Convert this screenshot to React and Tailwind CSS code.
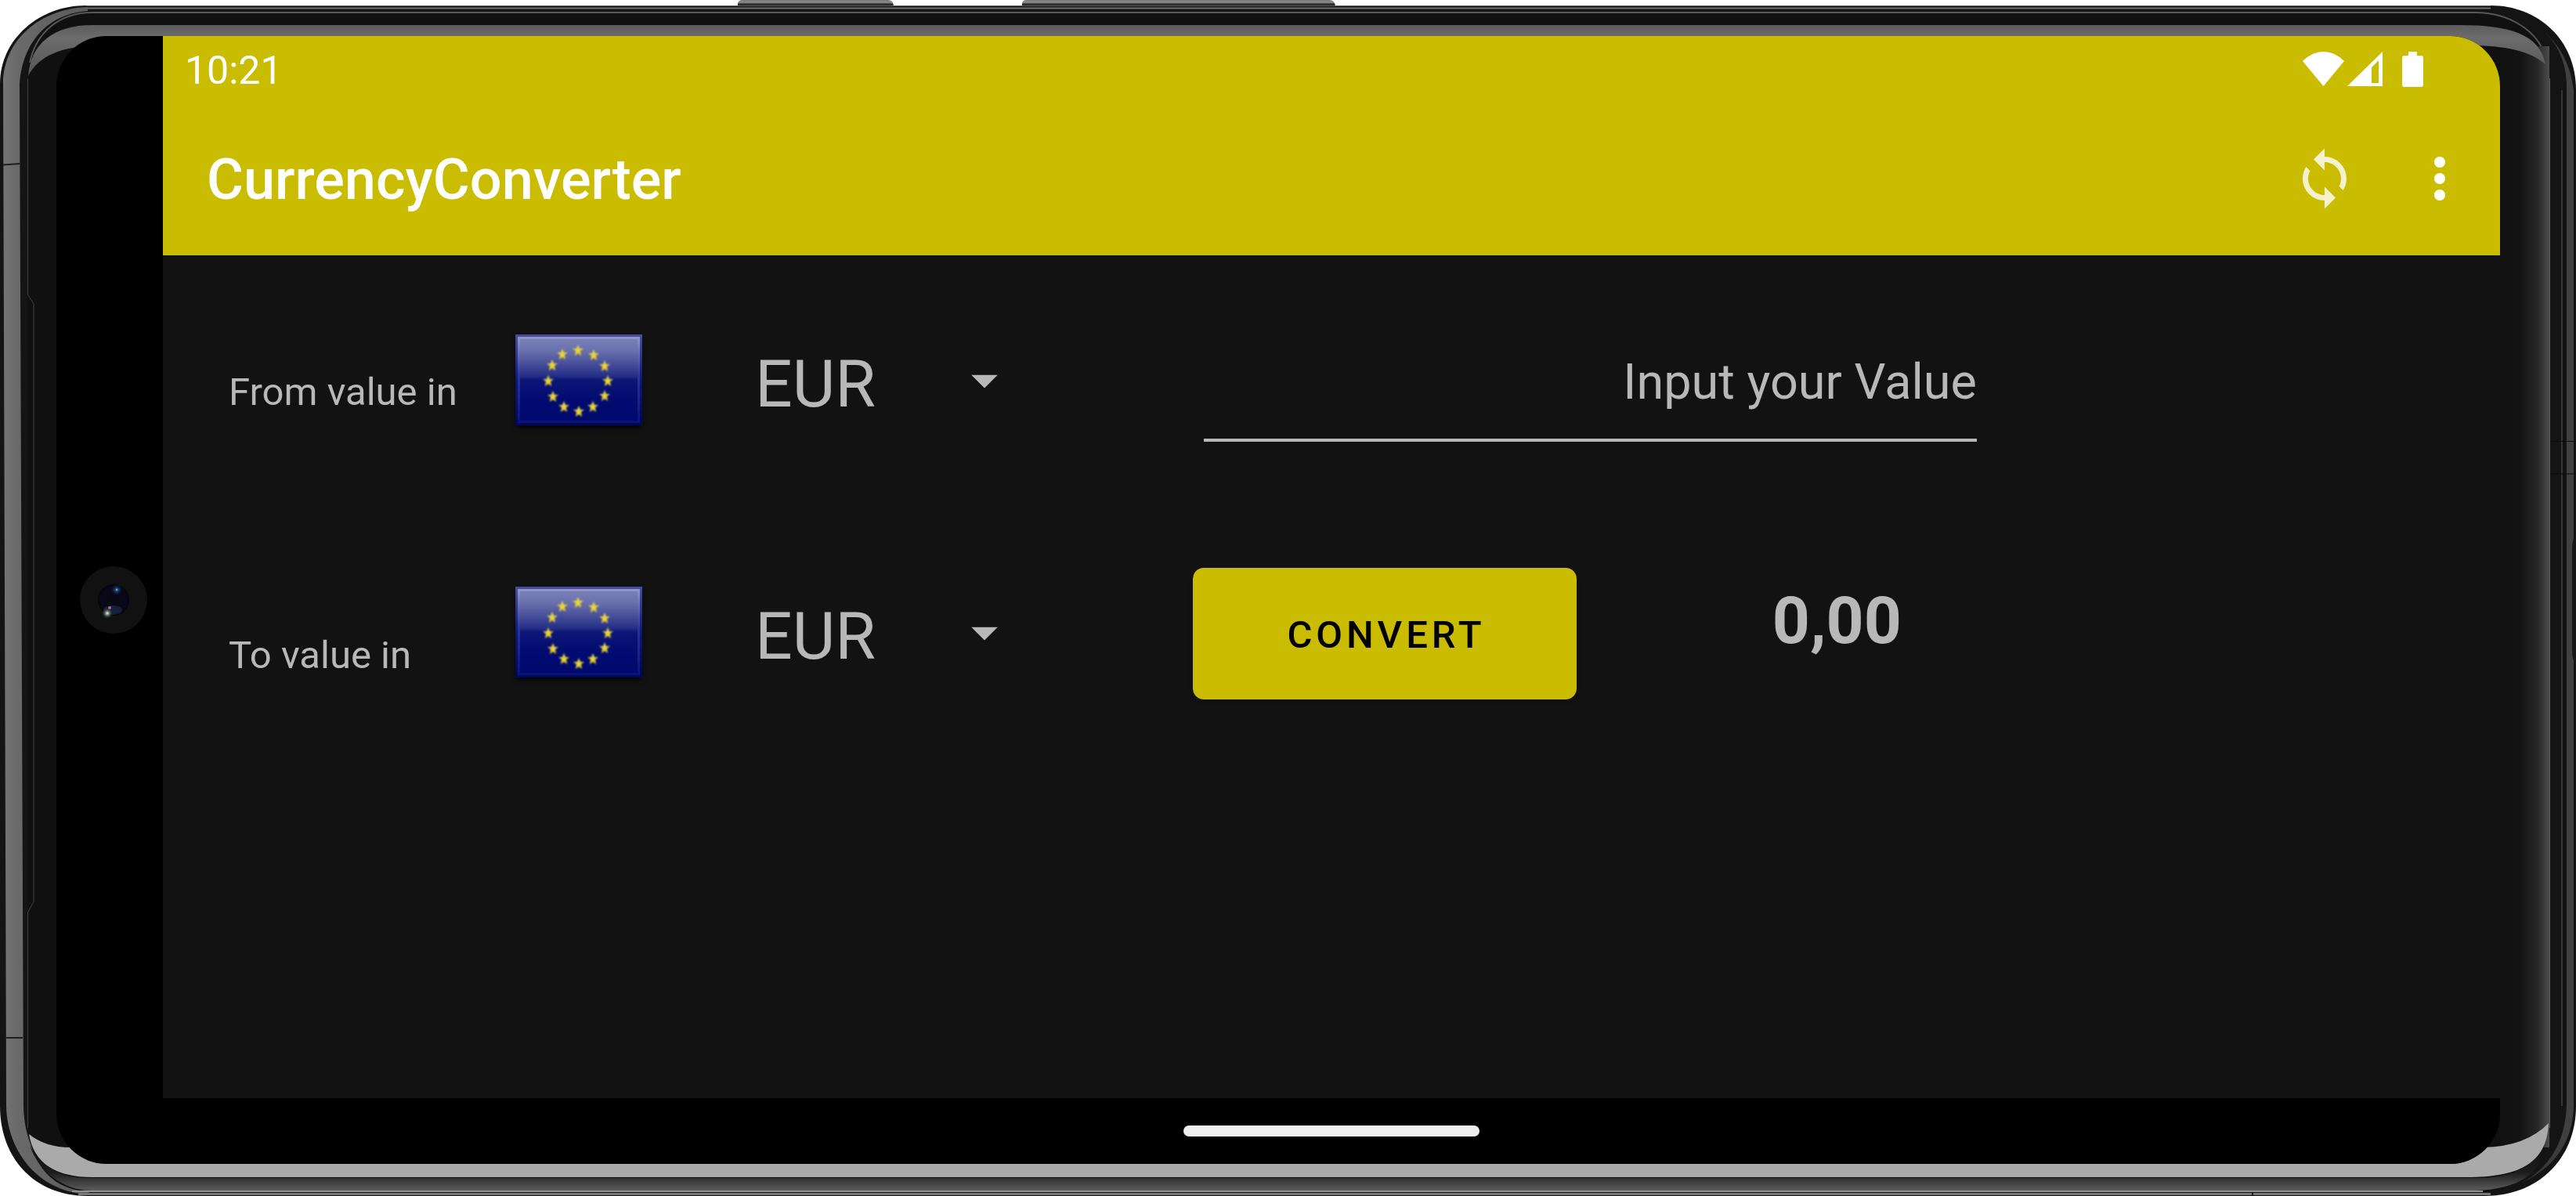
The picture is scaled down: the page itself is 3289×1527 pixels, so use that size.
import { useState } from "react";
import { MdMoreVert, MdSync } from "react-icons/md";

const STARS = [
  [80, 20], [100, 26], [114, 40], [118, 59], [114, 78], [99, 92],
  [81, 98], [62, 92], [48, 79], [42, 59], [47, 39], [60, 25],
];

const STAR_PATH = "M0 -7L2 -2L7 -2L3 1L4 7L0 4L-4 7L-3 1L-7 -2L-2 -2Z";

function Flag() {
  return (
    <svg viewBox="0 0 162 116" className="h-[116px] w-[162px] shadow-md shadow-black/60" role="img" aria-label="European Union">
      <defs>
        <linearGradient id="flagBlue" x1="0" y1="0" x2="0" y2="1">
          <stop offset="0" stopColor="#7d84ba" />
          <stop offset="0.18" stopColor="#6a70ad" />
          <stop offset="0.46" stopColor="#242e86" />
          <stop offset="0.5" stopColor="#0b1676" />
          <stop offset="0.75" stopColor="#000a70" />
          <stop offset="1" stopColor="#00086c" />
        </linearGradient>
        <linearGradient id="flagEdge" x1="0" y1="0" x2="0" y2="1">
          <stop offset="0" stopColor="#454ca0" />
          <stop offset="0.5" stopColor="#0e167a" />
          <stop offset="1" stopColor="#000760" />
        </linearGradient>
        <linearGradient id="flagInner" x1="0" y1="0" x2="0" y2="1">
          <stop offset="0" stopColor="#8f95c8" />
          <stop offset="0.45" stopColor="#2c3690" />
          <stop offset="1" stopColor="#0a1476" />
        </linearGradient>
        <linearGradient id="starGold" gradientUnits="userSpaceOnUse" x1="0" y1="-6" x2="0" y2="6">
          <stop offset="0" stopColor="#e8d850" />
          <stop offset="1" stopColor="#e6cf28" />
        </linearGradient>
        <filter id="starSoft"><feGaussianBlur stdDeviation="1" /></filter>
      </defs>
      <rect width="162" height="116" fill="url(#flagBlue)" />
      <rect x="4.500" y="4.500" width="153" height="107" fill="none" stroke="url(#flagInner)" strokeWidth="3" />
      <rect x="1.500" y="1.500" width="159" height="113" fill="none" stroke="url(#flagEdge)" strokeWidth="3" />
      <g filter="url(#starSoft)">
        {STARS.map(([x, y]) => (
          <path key={`${x}-${y}`} d={STAR_PATH} transform={`translate(${x} ${y})`} fill="url(#starGold)" />
        ))}
      </g>
    </svg>
  );
}

function CurrencySelect({ id }) {
  return (
    <div className="relative w-[310px]">
      <select id={id} className="w-full appearance-none bg-transparent pt-2 text-[84px] leading-[98px] text-[#b8b8b8] outline-none" defaultValue="EUR">
        <option>EUR</option>
        <option>USD</option>
        <option>GBP</option>
      </select>
      <svg viewBox="0 0 34 17" className="pointer-events-none absolute top-1/2 right-0 h-[17px] w-[34px] -translate-y-1/2" aria-hidden="true">
        <path d="M0 0H34L17 17Z" fill="#b8b8b8" />
      </svg>
    </div>
  );
}

function PhoneBody() {
  return (
    <svg viewBox="0 0 3289 1527" preserveAspectRatio="none" className="absolute inset-0 h-full w-full" aria-hidden="true">
      <defs>
        <linearGradient id="leftRail" x1="0" x2="1" y1="0" y2="0" gradientUnits="objectBoundingBox">
          <stop offset="0" stopColor="#747474" />
          <stop offset="0.15" stopColor="#6a6a6a" />
          <stop offset="1" stopColor="#5a5a5a" />
        </linearGradient>
        <linearGradient id="rightGlass" x1="0" x2="1" y1="0" y2="0">
          <stop offset="0" stopColor="#101010" />
          <stop offset="0.4" stopColor="#131313" />
          <stop offset="0.75" stopColor="#262626" />
          <stop offset="1" stopColor="#4c4c4c" />
        </linearGradient>
        <linearGradient id="rightRail" x1="0" x2="1" y1="0" y2="0">
          <stop offset="0" stopColor="#303030" />
          <stop offset="1" stopColor="#424242" />
        </linearGradient>
        <linearGradient id="topGlow" x1="0" x2="0" y1="0" y2="1">
          <stop offset="0" stopColor="#5c5c5c" />
          <stop offset="0.25" stopColor="#6c6c6c" />
          <stop offset="1" stopColor="#545454" />
        </linearGradient>
        <linearGradient id="bottomLip" x1="0" x2="0" y1="0" y2="1">
          <stop offset="0" stopColor="#101010" />
          <stop offset="0.6" stopColor="#1c1c1c" />
          <stop offset="1" stopColor="#5c5c5c" />
        </linearGradient>
        <linearGradient id="keyMetal" x1="0" x2="0" y1="0" y2="1">
          <stop offset="0" stopColor="#777777" />
          <stop offset="0.35" stopColor="#8d8d8d" />
          <stop offset="0.55" stopColor="#303030" />
          <stop offset="1" stopColor="#1c1c1c" />
        </linearGradient>
      </defs>

      {/* side keys */}
      <path d="M942 9V5Q942 0 948 0H1134Q1141 0 1141 9Z" fill="url(#keyMetal)" />
      <path d="M1305 9V5Q1305 0 1311 0H1697Q1705 0 1705 9Z" fill="url(#keyMetal)" />

      {/* outer shell */}
      <path d="M110 7H3180C3240 7 3289 50 3289 115V1412C3289 1480 3240 1527 3172 1527H112C45 1527 0 1480 0 1412V107C0 50 50 7 110 7Z" fill="#141414" />
      <path d="M110 7.500H3180" stroke="#5c5c5c" strokeWidth="1" />
      <path d="M110 10.500H3180" stroke="#6e6e6e" strokeWidth="2" />

      {/* metal rails */}
      <path d="M112 9C50 11 4 52 4 107L8 1412C9 1472 52 1524 116 1525L112 1521C62 1514 31 1470 30 1412L25 112C26 62 55 18 112 14Z" fill="url(#leftRail)" />
      <path d="M4 210.500L25 209M8 1325H29" stroke="#202020" strokeWidth="2" fill="none" />
      <path d="M3277 105Q3274 60 3243 36Q3280 65 3286 115V1412Q3284 1480 3220 1510Q3274 1480 3277 1412Z" fill="url(#rightRail)" />
      <path d="M3271 115V1412" stroke="#343434" strokeWidth="2" />
      <path d="M3257 563.500H3289M3257 605H3289" stroke="#080808" strokeWidth="1" />
      <path d="M3289 680Q3284 690 3284 700V832Q3284 842 3289 850Z" fill="#161616" />
      <path d="M100 1524.500H3180" stroke="#787878" strokeWidth="3" />
      <path d="M2876 1523V1527" stroke="#1c1c1c" strokeWidth="2" />

      {/* glass */}
      <path d="M112 17H3160C3222 17 3256 52 3256 112V1424C3256 1488 3220 1521 3160 1521H116C64 1521 35 1482 35 1424V100C36 48 65 17 112 17Z" fill="#101010" />
      <path d="M38 80C46 42 75 16 118 16H3160C3205 16 3240 40 3250 72" fill="none" stroke="#565656" strokeWidth="2" />
      <rect x="3192" y="59" width="63" height="1406" fill="url(#rightGlass)" />
      <path d="M3255.500 100V1440" stroke="#5a5a5a" strokeWidth="1" />
      <path d="M110 1504H3170C3215 1502 3240 1484 3248 1462C3246 1498 3215 1519 3160 1520H116C80 1520 48 1494 38 1462C52 1490 78 1504 110 1504Z" fill="url(#bottomLip)" />
      <path d="M92 1521H3170" stroke="#929292" strokeWidth="2" />
      <path d="M36 97C39 56 68 32 118 32H3140C3205 32 3243 44 3250 82C3230 65 3200 58 3150 58H120C80 60 50 70 36 97Z" fill="url(#topGlow)" />
      <path d="M37 1448Q58 1465 90 1465H3170Q3225 1464 3254 1434C3252 1486 3215 1503 3150 1503H118Q46 1503 37 1448Z" fill="#aaaaaa" />
      <path d="M35.500 100V376L43 388V1151L35.500 1165V1440" fill="none" stroke="#424242" strokeWidth="1" />
    </svg>
  );
}

function Camera() {
  return (
    <svg viewBox="0 0 86 86" className="h-[86px] w-[86px]" aria-hidden="true">
      <defs>
        <radialGradient id="lens" cx="0.5" cy="0.5" r="0.5">
          <stop offset="0" stopColor="#0c0710" />
          <stop offset="0.8" stopColor="#08091a" />
          <stop offset="1" stopColor="#050507" />
        </radialGradient>
        <radialGradient id="glintBlue">
          <stop offset="0" stopColor="#9bd0f0" />
          <stop offset="0.25" stopColor="#1d4a76" />
          <stop offset="1" stopColor="#0a1c3c" stopOpacity="0" />
        </radialGradient>
        <radialGradient id="glintWarm">
          <stop offset="0" stopColor="#f4f4d8" />
          <stop offset="0.35" stopColor="#75806c" />
          <stop offset="1" stopColor="#20283c" stopOpacity="0" />
        </radialGradient>
      </defs>
      <circle cx="43" cy="43" r="43" fill="#111111" />
      <circle cx="43" cy="43" r="20" fill="url(#lens)" />
      <ellipse cx="42" cy="56" rx="12" ry="6" fill="#2c4c80" opacity="0.35" />
      <circle cx="47" cy="30" r="7" fill="url(#glintBlue)" />
      <circle cx="35" cy="60" r="7" fill="url(#glintWarm)" />
      <circle cx="38" cy="53" r="2" fill="#a86a9c" />
    </svg>
  );
}

function StatusIcons() {
  return (
    <div className="flex items-center text-white" aria-hidden="true">
      <svg viewBox="0 0 53 44" className="h-[44px] w-[53px]">
        <path d="M0 12Q12 0 26.500 0T53 12L26.500 44Z" fill="currentColor" />
      </svg>
      <svg viewBox="0 0 45 44" className="ml-1 h-[44px] w-[45px]">
        <path fillRule="evenodd" d="M0 44L45 0V44ZM31 20V40H40V11Z" fill="currentColor" />
      </svg>
      <svg viewBox="0 0 27 45" className="ml-[25px] h-[45px] w-[27px]">
        <path d="M8 0H19V5H24Q27 5 27 8V42Q27 45 24 45H3Q0 45 0 42V8Q0 5 3 5H8Z" fill="currentColor" />
      </svg>
    </div>
  );
}

const ROW = "grid h-[322px] grid-cols-[366fr_306fr_559fr_1001fr_668fr] items-center";

export default function App() {
  const [value, setValue] = useState("");

  return (
    <div className="relative min-h-screen bg-white pt-[46px] pr-[97px] pb-[41px] pl-[72px] font-['Roboto',sans-serif]">
      <PhoneBody />
      <div className="relative flex min-h-[1440px] overflow-hidden rounded-[64px] bg-black">
        <div className="flex w-[136px] shrink-0 items-center pl-[30px]">
          <Camera />
        </div>

        <div className="flex flex-1 flex-col">
          <header className="bg-[#cabc00] text-white">
            <div className="flex h-[84px] items-center justify-between pr-[98px] pl-7">
              <time className="pt-1 text-[50px] leading-[58px]">10:21</time>
              <StatusIcons />
            </div>
            <div className="flex h-[196px] items-center justify-between pr-[35px] pl-14">
              <h1 className="pt-1 text-[72px] leading-[82px] font-medium">CurrencyConverter</h1>
              <div className="flex items-center gap-[63px]">
                <button type="button" aria-label="Refresh rates">
                  <MdSync className="h-[84px] w-[84px] text-white/80" />
                </button>
                <button type="button" aria-label="More options">
                  <MdMoreVert className="h-[84px] w-[84px]" />
                </button>
              </div>
            </div>
          </header>

          <main className="flex-1 bg-[#121212] pl-[84px] text-[#b8b8b8]">
            <div className={ROW}>
              <label htmlFor="from" className="pt-7 text-[49px] leading-[58px]">From value in</label>
              <div className="pb-1"><Flag /></div>
              <CurrencySelect id="from" />
              <div className="pt-10 pl-[14px]">
                <input
                  type="text"
                  inputMode="decimal"
                  aria-label="Input your Value"
                  placeholder="Input your Value"
                  value={value}
                  onChange={(e) => setValue(e.target.value)}
                  className="block w-full border-b-4 border-[#b8b8b8] bg-transparent pb-[35px] text-right text-[63px] leading-[74px] outline-none placeholder:text-[#b8b8b8]"
                />
              </div>
            </div>
            <div className={ROW}>
              <label htmlFor="to" className="pt-14 text-[49px] leading-[58px]">To value in</label>
              <div className="pb-1"><Flag /></div>
              <CurrencySelect id="to" />
              <div className="flex items-center justify-between pr-24">
                <button type="button" className="h-[168px] w-[490px] rounded-[14px] bg-[#cabc00] pt-1 pl-1 text-[49px] font-medium tracking-widest text-black uppercase shadow-md">
                  Convert
                </button>
                <output className="pb-8 text-[84px] leading-[98px] font-bold">0,00</output>
              </div>
            </div>
          </main>

          <nav className="flex h-[84px] items-center bg-black" aria-label="System navigation">
            <button type="button" aria-label="Home" className="mx-auto h-[14px] w-[378px] rounded-full bg-[#eeeeee]" />
          </nav>
        </div>
      </div>
    </div>
  );
}
